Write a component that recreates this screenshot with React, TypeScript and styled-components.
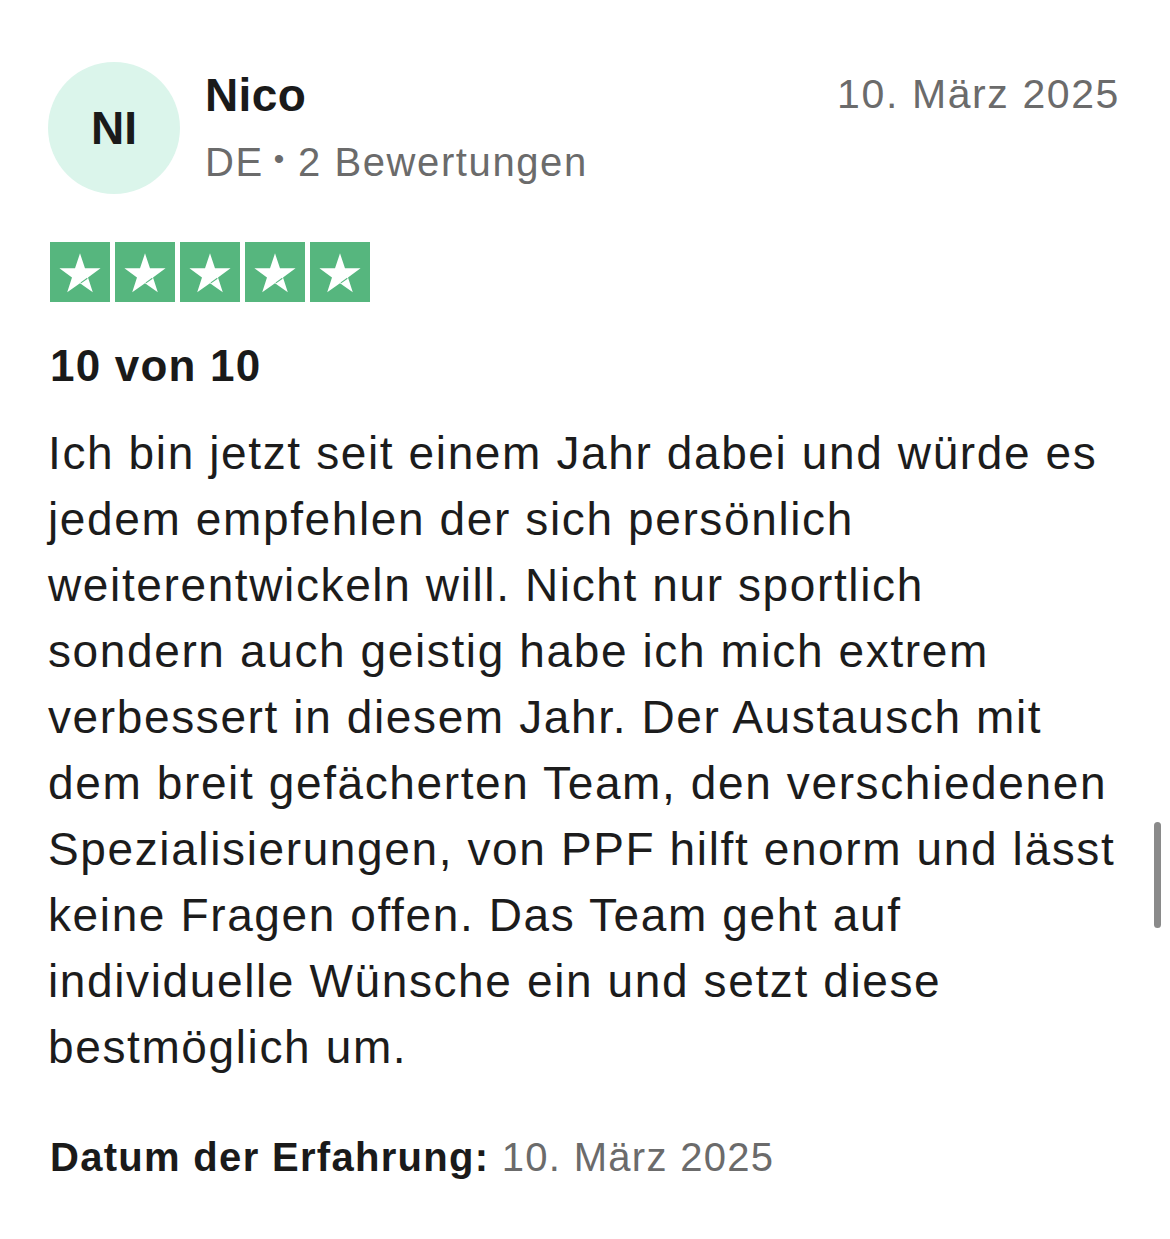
import React from "react";
import styled, { createGlobalStyle } from "styled-components";

const GlobalStyle = createGlobalStyle`
  html, body {
    margin: 0;
    padding: 0;
    background: #ffffff;
  }
  body {
    font-family: "Liberation Sans", Arial, sans-serif;
    color: #1c1c1c;
    -webkit-font-smoothing: antialiased;
  }
`;

const review = {
  initials: "NI",
  name: "Nico",
  country: "DE",
  reviews: "2 Bewertungen",
  date: "10. März 2025",
  rating: 5,
  title: "10 von 10",
  // 원본 화면과 같은 줄바꿈
  bodyLines: [
    "Ich bin jetzt seit einem Jahr dabei und würde es",
    "jedem empfehlen der sich persönlich",
    "weiterentwickeln will. Nicht nur sportlich",
    "sondern auch geistig habe ich mich extrem",
    "verbessert in diesem Jahr. Der Austausch mit",
    "dem breit gefächerten Team, den verschiedenen",
    "Spezialisierungen, von PPF hilft enorm und lässt",
    "keine Fragen offen. Das Team geht auf",
    "individuelle Wünsche ein und setzt diese",
    "bestmöglich um.",
  ],
  experience: "10. März 2025",
};

// 별 하나
const Star = () => (
  <StarBox>
    <svg width="52" height="52" viewBox="0 -0.8 24 24">
      <path
        d="M12 2.6l2.3 6.9h7.2l-5.8 4.2 2.2 6.9L12 16.4l-5.9 4.2 2.2-6.9-5.8-4.2h7.2z"
        fill="#ffffff"
      />
      <path d="M15.4 14.1L12.4 16.2" stroke="#56b67e" strokeWidth="0.5" />
    </svg>
  </StarBox>
);

const App: React.FC = () => {
  return (
    <>
      <GlobalStyle />
      <Card>
        <Header>
          <Avatar>{review.initials}</Avatar>
          <UserInfo>
            <UserName>{review.name}</UserName>
            <UserMeta>
              {review.country}
              <Dot>•</Dot>
              {review.reviews}
            </UserMeta>
          </UserInfo>
          <PostDate>{review.date}</PostDate>
        </Header>

        <Stars>
          {Array.from({ length: review.rating }).map((_, i) => (
            <Star key={i} />
          ))}
        </Stars>

        <Title>{review.title}</Title>
        <Body>
          {review.bodyLines.map((line, i) => (
            <BodyLine key={i}>{line}</BodyLine>
          ))}
        </Body>

        <Experience>
          <strong>Datum der Erfahrung:</strong> <span>{review.experience}</span>
        </Experience>
      </Card>
      <ScrollThumb />
    </>
  );
};

export default App;

// 카드 전체
const Card = styled.div`
  padding: 62px 52px 40px 48px;
`;

// 헤더 (아바타, 이름, 날짜)
const Header = styled.div`
  display: flex;
  align-items: flex-start;
`;

const Avatar = styled.div`
  width: 132px;
  height: 132px;
  border-radius: 50%;
  background: #dbf5eb;
  display: flex;
  align-items: center;
  justify-content: center;
  font-weight: bold;
  font-size: 46px;
  color: #1a1a1a;
  flex-shrink: 0;
`;

const UserInfo = styled.div`
  display: flex;
  flex-direction: column;
  margin-left: 25px;
  flex: 1;
`;

const UserName = styled.div`
  font-weight: bold;
  font-size: 46px;
  line-height: 56px;
  margin-top: 5px;
  color: #1a1a1a;
  letter-spacing: 0.4px;
`;

const UserMeta = styled.div`
  font-size: 40px;
  line-height: 50px;
  margin-top: 14px;
  color: #6b6b6b;
  letter-spacing: 1.6px;
`;

const Dot = styled.span`
  font-size: 30px;
  position: relative;
  top: -7px;
  margin: 0 12px 0 10px;
`;

const PostDate = styled.div`
  font-size: 41px;
  line-height: 50px;
  margin-top: 7px;
  color: #6b6b6b;
  letter-spacing: 1.6px;
  margin-right: -2px;
`;

// 별점
const Stars = styled.div`
  display: flex;
  gap: 5px;
  margin-top: 48px;
  margin-left: 2px;
`;

const StarBox = styled.div`
  width: 60px;
  height: 60px;
  background: #56b67e;
  display: flex;
  align-items: center;
  justify-content: center;
`;

const Title = styled.h2`
  font-size: 44px;
  line-height: 56px;
  font-weight: bold;
  margin: 36px 0 0 2px;
  color: #1a1a1a;
  letter-spacing: 1.2px;
`;

const Body = styled.p`
  font-size: 46px;
  line-height: 66px;
  margin: 26px -20px 0 0;
  color: #1c1c1c;
  letter-spacing: 1.62px;
`;

const BodyLine = styled.span`
  display: block;
  white-space: nowrap;
`;

const Experience = styled.div`
  font-size: 40px;
  line-height: 50px;
  margin-top: 52px;
  margin-left: 2px;
  letter-spacing: 1.3px;

  strong {
    color: #1a1a1a;
  }
  span {
    color: #6b6b6b;
  }
`;

// iOS 스크롤 표시
const ScrollThumb = styled.div`
  position: fixed;
  top: 822px;
  right: 9px;
  width: 7px;
  height: 106px;
  border-radius: 4px;
  background: #8a8a8a;
`;
